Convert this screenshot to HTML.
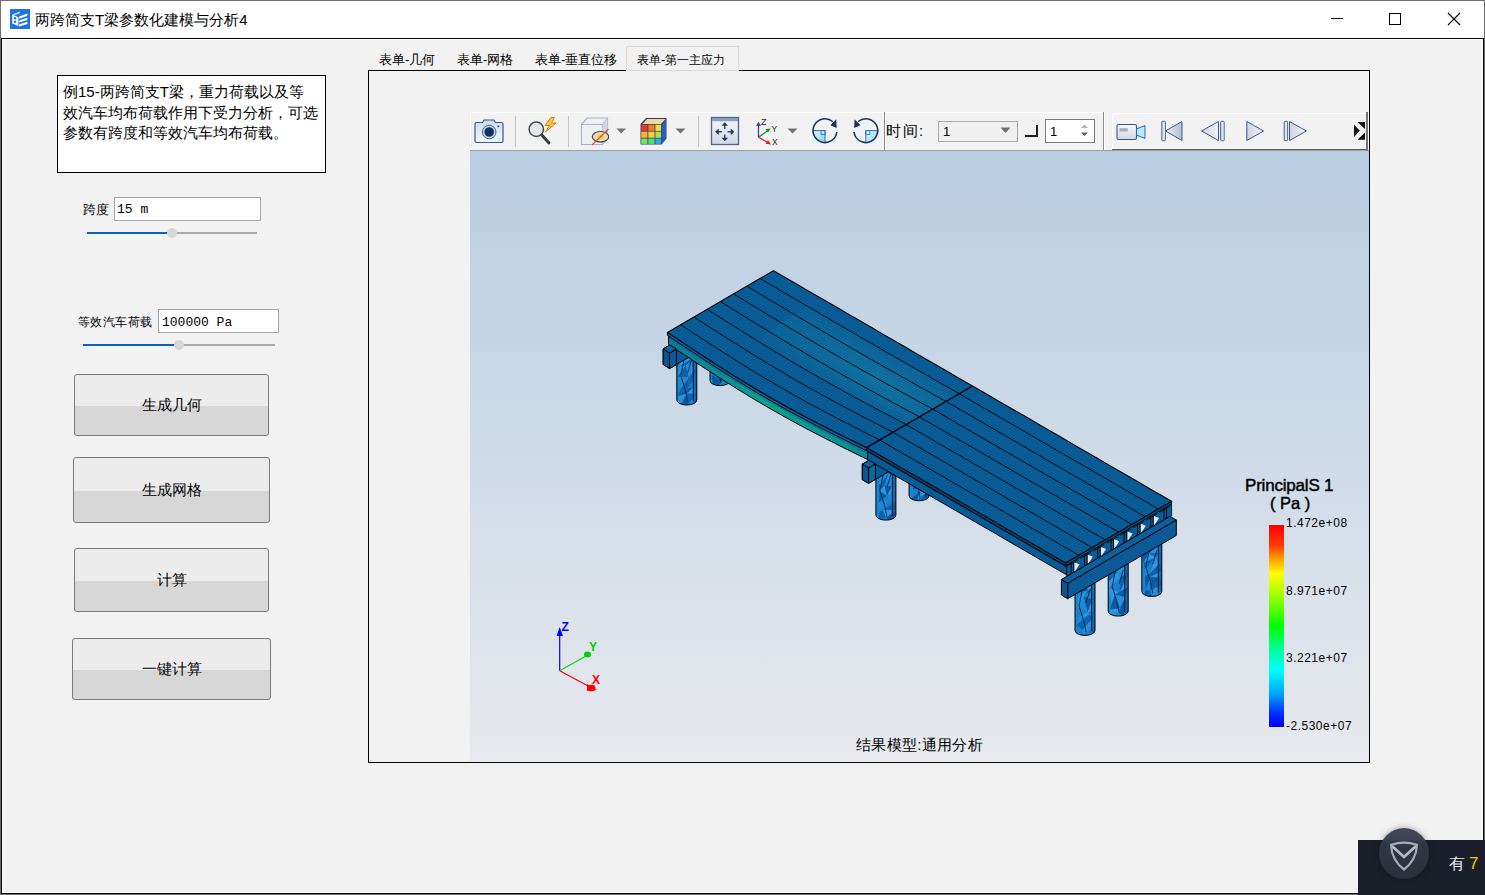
<!DOCTYPE html>
<html><head><meta charset="utf-8">
<style>
*{margin:0;padding:0;box-sizing:border-box}
html,body{width:1485px;height:895px;overflow:hidden;background:#f2f2f2;font-family:"Liberation Sans",sans-serif;color:#000}
.a{position:absolute}
.t{white-space:nowrap;line-height:1}
.btn{border:1px solid #7a7a7a;border-radius:3px;background:linear-gradient(#ececec 0,#ececec 51.5%,#d7d7d7 51.5%,#d7d7d7 100%);display:flex;align-items:center;justify-content:center;font-size:15px}
</style></head><body>
<!-- window frame -->
<div class="a" style="left:0;top:0;width:1485px;height:895px;background:#6f6f6f"></div>
<div class="a" style="left:1px;top:1px;width:1483px;height:37px;background:#fff"></div>
<div class="a" style="left:1px;top:38px;width:1483px;height:856px;background:#000"></div>
<div class="a" style="left:2px;top:39px;width:1481px;height:854px;background:#fff"></div>
<div class="a" style="left:3px;top:40px;width:1479px;height:852px;background:#f2f2f2"></div>

<!-- title -->
<svg class="a" style="left:10px;top:9px" width="20" height="20" viewBox="0 0 20 20">
 <rect width="20" height="20" fill="#1d74e6"/>
 <path d="M2.2,5.4 L9.8,2.4 L9.8,4.2 L4.2,6.3 Z" fill="#dcdcdc"/>
 <path d="M2.2,5.4 L8.4,8.2 L8.4,16.9 L2.2,14.6 Z" fill="#fff"/>
 <ellipse cx="5" cy="9.2" rx="1.2" ry="1.3" fill="#1d74e6"/>
 <ellipse cx="5" cy="12.8" rx="1.2" ry="1.3" fill="#1d74e6"/>
 <path d="M9.2,7.6 L17.4,4.6 L17.4,6.8 L9.2,9.8 Z M9.2,11.4 L17.4,8.7 L17.4,10.9 L9.2,13.6 Z M9.2,15.3 L17.4,12.7 L17.4,14.9 L9.2,17.5 Z" fill="#fff"/>
</svg>
<div class="a t" style="left:35px;top:12px;font-size:15px">两跨简支T梁参数化建模与分析4</div>
<!-- window controls -->
<div class="a" style="left:1331px;top:18px;width:12px;height:1px;background:#000"></div>
<div class="a" style="left:1389px;top:13px;width:12px;height:12px;border:1px solid #000"></div>
<svg class="a" style="left:1447px;top:12px" width="14" height="14" viewBox="0 0 14 14"><path d="M1 1 L13 13 M13 1 L1 13" stroke="#000" stroke-width="1.1"/></svg>

<!-- left panel -->
<div class="a" style="left:57px;top:75px;width:269px;height:98px;background:#fff;border:1px solid #000"></div>
<div class="a t" style="left:63px;top:82px;font-size:15px;line-height:20.5px">例15-两跨简支T梁，重力荷载以及等<br>效汽车均布荷载作用下受力分析，可选<br>参数有跨度和等效汽车均布荷载。</div>

<div class="a t" style="left:83px;top:203px;font-size:13px">跨度</div>
<div class="a" style="left:114px;top:197px;width:147px;height:24px;background:#fff;border:1px solid #a5a5a5"></div>
<div class="a t" style="left:117px;top:203px;font-size:13px;font-family:'Liberation Mono',monospace">15 m</div>
<div class="a" style="left:87px;top:232px;width:85px;height:2px;background:#0a63c4"></div>
<div class="a" style="left:172px;top:232px;width:85px;height:2px;background:#a8a8a8"></div>
<div class="a" style="left:167px;top:228px;width:10px;height:10px;border-radius:50%;background:#d6d6d6"></div>

<div class="a t" style="left:78px;top:316px;font-size:12px;letter-spacing:0.45px">等效汽车荷载</div>
<div class="a" style="left:158px;top:309px;width:121px;height:24px;background:#fff;border:1px solid #a5a5a5"></div>
<div class="a t" style="left:162px;top:316px;font-size:13px;font-family:'Liberation Mono',monospace">100000 Pa</div>
<div class="a" style="left:83px;top:344px;width:96px;height:2px;background:#0a63c4"></div>
<div class="a" style="left:179px;top:344px;width:96px;height:2px;background:#a8a8a8"></div>
<div class="a" style="left:174px;top:340px;width:10px;height:10px;border-radius:50%;background:#d6d6d6"></div>

<div class="a btn" style="left:74px;top:374px;width:195px;height:62px"><span>生成几何</span></div>
<div class="a btn" style="left:73px;top:457px;width:197px;height:66px"><span>生成网格</span></div>
<div class="a btn" style="left:74px;top:548px;width:195px;height:64px"><span>计算</span></div>
<div class="a btn" style="left:72px;top:638px;width:199px;height:62px"><span>一键计算</span></div>

<!-- tabs -->
<div class="a t" style="left:379px;top:54px;font-size:12.5px">表单-几何</div>
<div class="a t" style="left:457px;top:54px;font-size:12.5px">表单-网格</div>
<div class="a t" style="left:535px;top:54px;font-size:12.5px">表单-垂直位移</div>
<div class="a" style="left:368px;top:70px;width:1002px;height:693px;border:1px solid #000;background:#f2f2f2"></div>
<div class="a" style="left:626px;top:46px;width:113px;height:25px;border:1px solid #d9d9d9;background:#f2f2f2"></div>
<div class="a t" style="left:637px;top:54px;font-size:12.2px">表单-第一主应力</div>


<!-- viewport -->
<div class="a" style="left:470px;top:151px;width:899px;height:610px;background:linear-gradient(#b8cde3,#e7e9ed)"></div>
<svg class="a" style="left:0;top:0" width="1485" height="895" viewBox="0 0 1485 895">
<defs>
<linearGradient id="gp" x1="0" x2="1" y1="0" y2="0"><stop offset="0" stop-color="#136fba"/><stop offset="0.5" stop-color="#1f8fdc"/><stop offset="1" stop-color="#1070bd"/></linearGradient>
<linearGradient id="gfL" gradientUnits="userSpaceOnUse" x1="670" y1="0" x2="866" y2="0"><stop offset="0" stop-color="#0b6c9c"/><stop offset="0.45" stop-color="#0b8898"/><stop offset="1" stop-color="#0b7598"/></linearGradient>
<linearGradient id="gfL2" gradientUnits="userSpaceOnUse" x1="670" y1="0" x2="866" y2="0"><stop offset="0" stop-color="#0c7a9a"/><stop offset="0.5" stop-color="#10a08c"/><stop offset="1" stop-color="#0d8c94"/></linearGradient>
<linearGradient id="gdeck" gradientUnits="userSpaceOnUse" x1="700" y1="300" x2="1150" y2="540"><stop offset="0" stop-color="#085b95"/><stop offset="1" stop-color="#085b95"/></linearGradient>
<radialGradient id="ghl" gradientUnits="userSpaceOnUse" cx="880" cy="380" r="120" gradientTransform="translate(880 380) rotate(30) scale(1.6 0.35) translate(-880 -380)"><stop offset="0" stop-color="#1a88a8" stop-opacity="0.5"/><stop offset="1" stop-color="#1a88a8" stop-opacity="0"/></radialGradient>
</defs>
<clipPath id="pc1"><path d="M743.6,312.0 L743.6,361.0 A10,5 0 0 0 763.6,361.0 L763.6,312.0 Z"/></clipPath>
<path d="M743.6,312.0 L743.6,361.0 A10,5 0 0 0 763.6,361.0 L763.6,312.0 Z" fill="#1a84d0"/>
<g clip-path="url(#pc1)"><polygon points="745.9,311.6 754.2,309.6 746.2,319.0" fill="#3098e0"/><polygon points="754.2,309.6 753.7,319.6 746.2,319.0" fill="#0d62ac"/><polygon points="754.2,309.6 760.3,313.9 753.7,319.6" fill="#2590dc"/><polygon points="760.3,313.9 762.6,323.7 753.7,319.6" fill="#2590dc"/><polygon points="746.2,319.0 753.7,319.6 747.6,327.3" fill="#3098e0"/><polygon points="753.7,319.6 756.5,330.8 747.6,327.3" fill="#1a80cc"/><polygon points="753.7,319.6 762.6,323.7 756.5,330.8" fill="#0b58a0"/><polygon points="762.6,323.7 762.1,328.7 756.5,330.8" fill="#1e88d4"/><polygon points="747.6,327.3 756.5,330.8 746.3,338.7" fill="#2590dc"/><polygon points="756.5,330.8 755.1,340.3 746.3,338.7" fill="#0b58a0"/><polygon points="756.5,330.8 762.1,328.7 755.1,340.3" fill="#2590dc"/><polygon points="762.1,328.7 763.1,340.6 755.1,340.3" fill="#0d62ac"/><polygon points="746.3,338.7 755.1,340.3 747.5,350.8" fill="#3098e0"/><polygon points="755.1,340.3 754.5,344.3 747.5,350.8" fill="#0b58a0"/><polygon points="755.1,340.3 763.1,340.6 754.5,344.3" fill="#1a80cc"/><polygon points="763.1,340.6 763.6,345.8 754.5,344.3" fill="#0b58a0"/><polygon points="747.5,350.8 754.5,344.3 747.3,355.8" fill="#0d62ac"/><polygon points="754.5,344.3 752.5,360.2 747.3,355.8" fill="#2590dc"/><polygon points="754.5,344.3 763.6,345.8 752.5,360.2" fill="#2590dc"/><polygon points="763.6,345.8 762.3,357.3 752.5,360.2" fill="#3098e0"/><polygon points="747.3,355.8 752.5,360.2 745.3,363.4" fill="#0d62ac"/><polygon points="752.5,360.2 754.3,368.7 745.3,363.4" fill="#0d62ac"/><polygon points="752.5,360.2 762.3,357.3 754.3,368.7" fill="#1a80cc"/><polygon points="762.3,357.3 763.0,364.3 754.3,368.7" fill="#3098e0"/><rect x="760.1" y="312.0" width="3.5" height="54.0" fill="#0b4f90" opacity="0.55"/></g>
<path d="M751.6,317.0 L747.6,336.3 L752.6,352.5 L754.6,363.0 M758.6,320.0 L754.6,333.6" fill="none" stroke="#06284e" stroke-width="0.9"/>
<line x1="760.1" y1="312.0" x2="760.1" y2="362.0" stroke="#041f40" stroke-width="1.1"/>
<path d="M743.6,312.0 L743.6,361.0 A10,5 0 0 0 763.6,361.0 L763.6,312.0 Z" fill="none" stroke="#000" stroke-width="1"/>
<clipPath id="pc2"><path d="M942.7,427.2 L942.7,476.2 A10,5 0 0 0 962.7,476.2 L962.7,427.2 Z"/></clipPath>
<path d="M942.7,427.2 L942.7,476.2 A10,5 0 0 0 962.7,476.2 L962.7,427.2 Z" fill="#1a84d0"/>
<g clip-path="url(#pc2)"><polygon points="944.8,429.1 956.4,425.6 945.3,433.9" fill="#1a80cc"/><polygon points="956.4,425.6 948.9,435.3 945.3,433.9" fill="#2590dc"/><polygon points="956.4,425.6 959.6,428.5 948.9,435.3" fill="#3098e0"/><polygon points="959.6,428.5 959.7,434.7 948.9,435.3" fill="#1a80cc"/><polygon points="945.3,433.9 948.9,435.3 944.7,444.1" fill="#0b58a0"/><polygon points="948.9,435.3 955.5,448.8 944.7,444.1" fill="#2590dc"/><polygon points="948.9,435.3 959.7,434.7 955.5,448.8" fill="#3098e0"/><polygon points="959.7,434.7 961.1,448.2 955.5,448.8" fill="#0d62ac"/><polygon points="944.7,444.1 955.5,448.8 942.9,456.1" fill="#2590dc"/><polygon points="955.5,448.8 955.7,451.4 942.9,456.1" fill="#0b58a0"/><polygon points="955.5,448.8 961.1,448.2 955.7,451.4" fill="#0d62ac"/><polygon points="961.1,448.2 959.9,454.6 955.7,451.4" fill="#0d62ac"/><polygon points="942.9,456.1 955.7,451.4 946.5,461.5" fill="#0b58a0"/><polygon points="955.7,451.4 953.0,466.3 946.5,461.5" fill="#1a80cc"/><polygon points="955.7,451.4 959.9,454.6 953.0,466.3" fill="#2590dc"/><polygon points="959.9,454.6 960.1,462.1 953.0,466.3" fill="#1a80cc"/><polygon points="946.5,461.5 953.0,466.3 943.0,474.9" fill="#2590dc"/><polygon points="953.0,466.3 952.5,476.2 943.0,474.9" fill="#1a80cc"/><polygon points="953.0,466.3 960.1,462.1 952.5,476.2" fill="#0d62ac"/><polygon points="960.1,462.1 962.1,474.1 952.5,476.2" fill="#1e88d4"/><polygon points="943.0,474.9 952.5,476.2 945.9,483.8" fill="#0b58a0"/><polygon points="952.5,476.2 948.8,480.2 945.9,483.8" fill="#0b58a0"/><polygon points="952.5,476.2 962.1,474.1 948.8,480.2" fill="#0b58a0"/><polygon points="962.1,474.1 962.5,482.7 948.8,480.2" fill="#0b58a0"/><rect x="959.2" y="427.2" width="3.5" height="54.0" fill="#0b4f90" opacity="0.55"/></g>
<path d="M950.7,432.2 L946.7,451.5 L951.7,467.7 L953.7,478.2 M957.7,435.2 L953.7,448.8" fill="none" stroke="#06284e" stroke-width="0.9"/>
<line x1="959.2" y1="427.2" x2="959.2" y2="477.2" stroke="#041f40" stroke-width="1.1"/>
<path d="M942.7,427.2 L942.7,476.2 A10,5 0 0 0 962.7,476.2 L962.7,427.2 Z" fill="none" stroke="#000" stroke-width="1"/>
<clipPath id="pc3"><path d="M1141.8,542.5 L1141.8,591.5 A10,5 0 0 0 1161.8,591.5 L1161.8,542.5 Z"/></clipPath>
<path d="M1141.8,542.5 L1141.8,591.5 A10,5 0 0 0 1161.8,591.5 L1161.8,542.5 Z" fill="#1a84d0"/>
<g clip-path="url(#pc3)"><polygon points="1144.6,544.6 1149.2,546.5 1142.2,553.1" fill="#1e88d4"/><polygon points="1149.2,546.5 1149.0,553.2 1142.2,553.1" fill="#1a80cc"/><polygon points="1149.2,546.5 1161.0,543.6 1149.0,553.2" fill="#0d62ac"/><polygon points="1161.0,543.6 1158.9,553.1 1149.0,553.2" fill="#2590dc"/><polygon points="1142.2,553.1 1149.0,553.2 1143.5,562.7" fill="#0b58a0"/><polygon points="1149.0,553.2 1155.7,557.5 1143.5,562.7" fill="#3098e0"/><polygon points="1149.0,553.2 1158.9,553.1 1155.7,557.5" fill="#0d62ac"/><polygon points="1158.9,553.1 1159.7,563.3 1155.7,557.5" fill="#1e88d4"/><polygon points="1143.5,562.7 1155.7,557.5 1144.7,569.2" fill="#0d62ac"/><polygon points="1155.7,557.5 1150.2,573.2 1144.7,569.2" fill="#1a80cc"/><polygon points="1155.7,557.5 1159.7,563.3 1150.2,573.2" fill="#3098e0"/><polygon points="1159.7,563.3 1161.4,571.1 1150.2,573.2" fill="#0d62ac"/><polygon points="1144.7,569.2 1150.2,573.2 1145.2,576.5" fill="#1e88d4"/><polygon points="1150.2,573.2 1150.4,577.0 1145.2,576.5" fill="#0b58a0"/><polygon points="1150.2,573.2 1161.4,571.1 1150.4,577.0" fill="#0d62ac"/><polygon points="1161.4,571.1 1159.6,577.7 1150.4,577.0" fill="#3098e0"/><polygon points="1145.2,576.5 1150.4,577.0 1145.4,590.1" fill="#0b58a0"/><polygon points="1150.4,577.0 1150.3,590.7 1145.4,590.1" fill="#1a80cc"/><polygon points="1150.4,577.0 1159.6,577.7 1150.3,590.7" fill="#0b58a0"/><polygon points="1159.6,577.7 1161.5,585.1 1150.3,590.7" fill="#0d62ac"/><polygon points="1145.4,590.1 1150.3,590.7 1144.4,598.3" fill="#0b58a0"/><polygon points="1150.3,590.7 1154.3,600.5 1144.4,598.3" fill="#0d62ac"/><polygon points="1150.3,590.7 1161.5,585.1 1154.3,600.5" fill="#2590dc"/><polygon points="1161.5,585.1 1158.3,595.1 1154.3,600.5" fill="#1e88d4"/><rect x="1158.3" y="542.5" width="3.5" height="54.0" fill="#0b4f90" opacity="0.55"/></g>
<path d="M1149.8,547.5 L1145.8,566.8 L1150.8,583.0 L1152.8,593.5 M1156.8,550.5 L1152.8,564.1" fill="none" stroke="#06284e" stroke-width="0.9"/>
<line x1="1158.3" y1="542.5" x2="1158.3" y2="592.5" stroke="#041f40" stroke-width="1.1"/>
<path d="M1141.8,542.5 L1141.8,591.5 A10,5 0 0 0 1161.8,591.5 L1161.8,542.5 Z" fill="none" stroke="#000" stroke-width="1"/>
<clipPath id="pc4"><path d="M710.0,331.6 L710.0,380.6 A10,5 0 0 0 730.0,380.6 L730.0,331.6 Z"/></clipPath>
<path d="M710.0,331.6 L710.0,380.6 A10,5 0 0 0 730.0,380.6 L730.0,331.6 Z" fill="#1a84d0"/>
<g clip-path="url(#pc4)"><polygon points="710.0,329.3 719.1,333.1 710.9,342.2" fill="#1e88d4"/><polygon points="719.1,333.1 717.2,342.6 710.9,342.2" fill="#0d62ac"/><polygon points="719.1,333.1 729.4,329.3 717.2,342.6" fill="#3098e0"/><polygon points="729.4,329.3 727.3,338.5 717.2,342.6" fill="#2590dc"/><polygon points="710.9,342.2 717.2,342.6 712.1,349.3" fill="#1a80cc"/><polygon points="717.2,342.6 719.3,353.6 712.1,349.3" fill="#1a80cc"/><polygon points="717.2,342.6 727.3,338.5 719.3,353.6" fill="#1a80cc"/><polygon points="727.3,338.5 729.6,346.8 719.3,353.6" fill="#1a80cc"/><polygon points="712.1,349.3 719.3,353.6 713.7,358.1" fill="#0b58a0"/><polygon points="719.3,353.6 717.6,357.3 713.7,358.1" fill="#3098e0"/><polygon points="719.3,353.6 729.6,346.8 717.6,357.3" fill="#3098e0"/><polygon points="729.6,346.8 728.5,361.4 717.6,357.3" fill="#1e88d4"/><polygon points="713.7,358.1 717.6,357.3 710.8,365.9" fill="#1e88d4"/><polygon points="717.6,357.3 720.7,368.0 710.8,365.9" fill="#1a80cc"/><polygon points="717.6,357.3 728.5,361.4 720.7,368.0" fill="#0d62ac"/><polygon points="728.5,361.4 726.2,369.7 720.7,368.0" fill="#1e88d4"/><polygon points="710.8,365.9 720.7,368.0 711.4,374.9" fill="#2590dc"/><polygon points="720.7,368.0 722.7,380.6 711.4,374.9" fill="#1a80cc"/><polygon points="720.7,368.0 726.2,369.7 722.7,380.6" fill="#0d62ac"/><polygon points="726.2,369.7 729.9,378.1 722.7,380.6" fill="#0b58a0"/><polygon points="711.4,374.9 722.7,380.6 713.5,386.5" fill="#0b58a0"/><polygon points="722.7,380.6 717.7,388.0 713.5,386.5" fill="#0b58a0"/><polygon points="722.7,380.6 729.9,378.1 717.7,388.0" fill="#1e88d4"/><polygon points="729.9,378.1 727.1,383.8 717.7,388.0" fill="#1a80cc"/><rect x="726.5" y="331.6" width="3.5" height="54.0" fill="#0b4f90" opacity="0.55"/></g>
<path d="M718.0,336.6 L714.0,355.9 L719.0,372.1 L721.0,382.6 M725.0,339.6 L721.0,353.2" fill="none" stroke="#06284e" stroke-width="0.9"/>
<line x1="726.5" y1="331.6" x2="726.5" y2="381.6" stroke="#041f40" stroke-width="1.1"/>
<path d="M710.0,331.6 L710.0,380.6 A10,5 0 0 0 730.0,380.6 L730.0,331.6 Z" fill="none" stroke="#000" stroke-width="1"/>
<clipPath id="pc5"><path d="M909.1,446.8 L909.1,495.8 A10,5 0 0 0 929.1,495.8 L929.1,446.8 Z"/></clipPath>
<path d="M909.1,446.8 L909.1,495.8 A10,5 0 0 0 929.1,495.8 L929.1,446.8 Z" fill="#1a84d0"/>
<g clip-path="url(#pc5)"><polygon points="911.6,446.4 920.9,443.3 911.5,453.8" fill="#1a80cc"/><polygon points="920.9,443.3 917.8,453.9 911.5,453.8" fill="#2590dc"/><polygon points="920.9,443.3 926.3,446.0 917.8,453.9" fill="#0d62ac"/><polygon points="926.3,446.0 927.8,457.2 917.8,453.9" fill="#0b58a0"/><polygon points="911.5,453.8 917.8,453.9 911.0,467.6" fill="#1e88d4"/><polygon points="917.8,453.9 919.7,462.6 911.0,467.6" fill="#0b58a0"/><polygon points="917.8,453.9 927.8,457.2 919.7,462.6" fill="#0d62ac"/><polygon points="927.8,457.2 926.6,465.0 919.7,462.6" fill="#1a80cc"/><polygon points="911.0,467.6 919.7,462.6 909.6,474.0" fill="#1e88d4"/><polygon points="919.7,462.6 915.2,472.8 909.6,474.0" fill="#2590dc"/><polygon points="919.7,462.6 926.6,465.0 915.2,472.8" fill="#0d62ac"/><polygon points="926.6,465.0 926.9,474.9 915.2,472.8" fill="#3098e0"/><polygon points="909.6,474.0 915.2,472.8 912.9,483.5" fill="#0d62ac"/><polygon points="915.2,472.8 915.3,482.6 912.9,483.5" fill="#1a80cc"/><polygon points="915.2,472.8 926.9,474.9 915.3,482.6" fill="#2590dc"/><polygon points="926.9,474.9 928.1,484.3 915.3,482.6" fill="#2590dc"/><polygon points="912.9,483.5 915.3,482.6 912.7,489.3" fill="#1e88d4"/><polygon points="915.3,482.6 921.3,490.1 912.7,489.3" fill="#0b58a0"/><polygon points="915.3,482.6 928.1,484.3 921.3,490.1" fill="#1e88d4"/><polygon points="928.1,484.3 928.4,491.5 921.3,490.1" fill="#0b58a0"/><polygon points="912.7,489.3 921.3,490.1 910.8,499.5" fill="#1a80cc"/><polygon points="921.3,490.1 917.2,500.3 910.8,499.5" fill="#0b58a0"/><polygon points="921.3,490.1 928.4,491.5 917.2,500.3" fill="#2590dc"/><polygon points="928.4,491.5 926.3,498.8 917.2,500.3" fill="#0d62ac"/><rect x="925.6" y="446.8" width="3.5" height="54.0" fill="#0b4f90" opacity="0.55"/></g>
<path d="M917.1,451.8 L913.1,471.1 L918.1,487.3 L920.1,497.8 M924.1,454.8 L920.1,468.4" fill="none" stroke="#06284e" stroke-width="0.9"/>
<line x1="925.6" y1="446.8" x2="925.6" y2="496.8" stroke="#041f40" stroke-width="1.1"/>
<path d="M909.1,446.8 L909.1,495.8 A10,5 0 0 0 929.1,495.8 L929.1,446.8 Z" fill="none" stroke="#000" stroke-width="1"/>
<clipPath id="pc6"><path d="M1108.2,562.1 L1108.2,611.1 A10,5 0 0 0 1128.2,611.1 L1128.2,562.1 Z"/></clipPath>
<path d="M1108.2,562.1 L1108.2,611.1 A10,5 0 0 0 1128.2,611.1 L1128.2,562.1 Z" fill="#1a84d0"/>
<g clip-path="url(#pc6)"><polygon points="1109.3,562.0 1114.8,560.8 1109.3,568.8" fill="#1a80cc"/><polygon points="1114.8,560.8 1116.7,573.0 1109.3,568.8" fill="#0d62ac"/><polygon points="1114.8,560.8 1127.9,559.2 1116.7,573.0" fill="#1e88d4"/><polygon points="1127.9,559.2 1128.0,571.8 1116.7,573.0" fill="#2590dc"/><polygon points="1109.3,568.8 1116.7,573.0 1108.7,581.9" fill="#0d62ac"/><polygon points="1116.7,573.0 1120.1,577.8 1108.7,581.9" fill="#3098e0"/><polygon points="1116.7,573.0 1128.0,571.8 1120.1,577.8" fill="#1e88d4"/><polygon points="1128.0,571.8 1124.8,581.4 1120.1,577.8" fill="#0b58a0"/><polygon points="1108.7,581.9 1120.1,577.8 1108.5,588.5" fill="#3098e0"/><polygon points="1120.1,577.8 1119.8,592.5 1108.5,588.5" fill="#1a80cc"/><polygon points="1120.1,577.8 1124.8,581.4 1119.8,592.5" fill="#0d62ac"/><polygon points="1124.8,581.4 1127.5,587.6 1119.8,592.5" fill="#3098e0"/><polygon points="1108.5,588.5 1119.8,592.5 1111.3,600.9" fill="#3098e0"/><polygon points="1119.8,592.5 1114.9,594.8 1111.3,600.9" fill="#3098e0"/><polygon points="1119.8,592.5 1127.5,587.6 1114.9,594.8" fill="#0d62ac"/><polygon points="1127.5,587.6 1125.2,597.0 1114.9,594.8" fill="#0b58a0"/><polygon points="1111.3,600.9 1114.9,594.8 1109.7,609.4" fill="#3098e0"/><polygon points="1114.9,594.8 1120.1,608.4 1109.7,609.4" fill="#0b58a0"/><polygon points="1114.9,594.8 1125.2,597.0 1120.1,608.4" fill="#2590dc"/><polygon points="1125.2,597.0 1124.7,608.5 1120.1,608.4" fill="#0b58a0"/><polygon points="1109.7,609.4 1120.1,608.4 1111.4,617.0" fill="#3098e0"/><polygon points="1120.1,608.4 1118.9,612.6 1111.4,617.0" fill="#2590dc"/><polygon points="1120.1,608.4 1124.7,608.5 1118.9,612.6" fill="#0b58a0"/><polygon points="1124.7,608.5 1124.5,618.6 1118.9,612.6" fill="#0b58a0"/><rect x="1124.7" y="562.1" width="3.5" height="54.0" fill="#0b4f90" opacity="0.55"/></g>
<path d="M1116.2,567.1 L1112.2,586.4 L1117.2,602.6 L1119.2,613.1 M1123.2,570.1 L1119.2,583.7" fill="none" stroke="#06284e" stroke-width="0.9"/>
<line x1="1124.7" y1="562.1" x2="1124.7" y2="612.1" stroke="#041f40" stroke-width="1.1"/>
<path d="M1108.2,562.1 L1108.2,611.1 A10,5 0 0 0 1128.2,611.1 L1128.2,562.1 Z" fill="none" stroke="#000" stroke-width="1"/>
<clipPath id="pc7"><path d="M676.8,351.0 L676.8,400.0 A10,5 0 0 0 696.8,400.0 L696.8,351.0 Z"/></clipPath>
<path d="M676.8,351.0 L676.8,400.0 A10,5 0 0 0 696.8,400.0 L696.8,351.0 Z" fill="#1a84d0"/>
<g clip-path="url(#pc7)"><polygon points="680.7,348.4 688.6,350.9 680.5,358.0" fill="#1e88d4"/><polygon points="688.6,350.9 690.8,359.3 680.5,358.0" fill="#1e88d4"/><polygon points="688.6,350.9 693.0,350.5 690.8,359.3" fill="#0b58a0"/><polygon points="693.0,350.5 696.1,359.1 690.8,359.3" fill="#3098e0"/><polygon points="680.5,358.0 690.8,359.3 679.3,366.2" fill="#3098e0"/><polygon points="690.8,359.3 685.9,365.1 679.3,366.2" fill="#0d62ac"/><polygon points="690.8,359.3 696.1,359.1 685.9,365.1" fill="#0d62ac"/><polygon points="696.1,359.1 696.5,367.1 685.9,365.1" fill="#1e88d4"/><polygon points="679.3,366.2 685.9,365.1 677.7,376.7" fill="#2590dc"/><polygon points="685.9,365.1 689.0,377.4 677.7,376.7" fill="#0d62ac"/><polygon points="685.9,365.1 696.5,367.1 689.0,377.4" fill="#2590dc"/><polygon points="696.5,367.1 693.4,380.4 689.0,377.4" fill="#0d62ac"/><polygon points="677.7,376.7 689.0,377.4 680.4,389.7" fill="#1e88d4"/><polygon points="689.0,377.4 687.4,388.4 680.4,389.7" fill="#0b58a0"/><polygon points="689.0,377.4 693.4,380.4 687.4,388.4" fill="#0d62ac"/><polygon points="693.4,380.4 693.3,387.3 687.4,388.4" fill="#1a80cc"/><polygon points="680.4,389.7 687.4,388.4 677.4,396.2" fill="#0d62ac"/><polygon points="687.4,388.4 687.0,393.5 677.4,396.2" fill="#0b58a0"/><polygon points="687.4,388.4 693.3,387.3 687.0,393.5" fill="#0b58a0"/><polygon points="693.3,387.3 696.4,394.1 687.0,393.5" fill="#3098e0"/><polygon points="677.4,396.2 687.0,393.5 679.6,406.9" fill="#2590dc"/><polygon points="687.0,393.5 688.1,404.5 679.6,406.9" fill="#0b58a0"/><polygon points="687.0,393.5 696.4,394.1 688.1,404.5" fill="#0d62ac"/><polygon points="696.4,394.1 696.7,402.1 688.1,404.5" fill="#1e88d4"/><rect x="693.3" y="351.0" width="3.5" height="54.0" fill="#0b4f90" opacity="0.55"/></g>
<path d="M684.8,356.0 L680.8,375.3 L685.8,391.5 L687.8,402.0 M691.8,359.0 L687.8,372.6" fill="none" stroke="#06284e" stroke-width="0.9"/>
<line x1="693.3" y1="351.0" x2="693.3" y2="401.0" stroke="#041f40" stroke-width="1.1"/>
<path d="M676.8,351.0 L676.8,400.0 A10,5 0 0 0 696.8,400.0 L696.8,351.0 Z" fill="none" stroke="#000" stroke-width="1"/>
<clipPath id="pc8"><path d="M875.9,466.1 L875.9,515.1 A10,5 0 0 0 895.9,515.1 L895.9,466.1 Z"/></clipPath>
<path d="M875.9,466.1 L875.9,515.1 A10,5 0 0 0 895.9,515.1 L895.9,466.1 Z" fill="#1a84d0"/>
<g clip-path="url(#pc8)"><polygon points="876.8,468.7 889.5,462.3 878.6,472.2" fill="#3098e0"/><polygon points="889.5,462.3 888.5,474.1 878.6,472.2" fill="#1e88d4"/><polygon points="889.5,462.3 892.5,467.4 888.5,474.1" fill="#1a80cc"/><polygon points="892.5,467.4 892.7,475.3 888.5,474.1" fill="#0b58a0"/><polygon points="878.6,472.2 888.5,474.1 878.9,485.5" fill="#1e88d4"/><polygon points="888.5,474.1 884.6,485.5 878.9,485.5" fill="#0d62ac"/><polygon points="888.5,474.1 892.7,475.3 884.6,485.5" fill="#2590dc"/><polygon points="892.7,475.3 892.0,486.5 884.6,485.5" fill="#1e88d4"/><polygon points="878.9,485.5 884.6,485.5 879.5,490.7" fill="#0b58a0"/><polygon points="884.6,485.5 887.0,495.9 879.5,490.7" fill="#3098e0"/><polygon points="884.6,485.5 892.0,486.5 887.0,495.9" fill="#0b58a0"/><polygon points="892.0,486.5 894.7,490.4 887.0,495.9" fill="#3098e0"/><polygon points="879.5,490.7 887.0,495.9 878.9,502.5" fill="#0b58a0"/><polygon points="887.0,495.9 889.6,500.1 878.9,502.5" fill="#1a80cc"/><polygon points="887.0,495.9 894.7,490.4 889.6,500.1" fill="#1e88d4"/><polygon points="894.7,490.4 895.5,502.6 889.6,500.1" fill="#1e88d4"/><polygon points="878.9,502.5 889.6,500.1 879.3,512.0" fill="#1e88d4"/><polygon points="889.6,500.1 882.8,509.8 879.3,512.0" fill="#1a80cc"/><polygon points="889.6,500.1 895.5,502.6 882.8,509.8" fill="#1a80cc"/><polygon points="895.5,502.6 895.4,510.5 882.8,509.8" fill="#0d62ac"/><polygon points="879.3,512.0 882.8,509.8 879.0,519.8" fill="#0b58a0"/><polygon points="882.8,509.8 886.2,517.9 879.0,519.8" fill="#0d62ac"/><polygon points="882.8,509.8 895.4,510.5 886.2,517.9" fill="#3098e0"/><polygon points="895.4,510.5 893.8,523.0 886.2,517.9" fill="#0b58a0"/><rect x="892.4" y="466.1" width="3.5" height="54.0" fill="#0b4f90" opacity="0.55"/></g>
<path d="M883.9,471.1 L879.9,490.4 L884.9,506.6 L886.9,517.1 M890.9,474.1 L886.9,487.7" fill="none" stroke="#06284e" stroke-width="0.9"/>
<line x1="892.4" y1="466.1" x2="892.4" y2="516.1" stroke="#041f40" stroke-width="1.1"/>
<path d="M875.9,466.1 L875.9,515.1 A10,5 0 0 0 895.9,515.1 L895.9,466.1 Z" fill="none" stroke="#000" stroke-width="1"/>
<clipPath id="pc9"><path d="M1075.0,581.4 L1075.0,630.4 A10,5 0 0 0 1095.0,630.4 L1095.0,581.4 Z"/></clipPath>
<path d="M1075.0,581.4 L1075.0,630.4 A10,5 0 0 0 1095.0,630.4 L1095.0,581.4 Z" fill="#1a84d0"/>
<g clip-path="url(#pc9)"><polygon points="1075.3,581.0 1083.0,581.0 1077.2,591.9" fill="#3098e0"/><polygon points="1083.0,581.0 1088.4,590.4 1077.2,591.9" fill="#0b58a0"/><polygon points="1083.0,581.0 1094.0,583.6 1088.4,590.4" fill="#3098e0"/><polygon points="1094.0,583.6 1093.1,588.2 1088.4,590.4" fill="#2590dc"/><polygon points="1077.2,591.9 1088.4,590.4 1078.1,596.8" fill="#1e88d4"/><polygon points="1088.4,590.4 1083.9,596.7 1078.1,596.8" fill="#3098e0"/><polygon points="1088.4,590.4 1093.1,588.2 1083.9,596.7" fill="#0b58a0"/><polygon points="1093.1,588.2 1092.1,599.2 1083.9,596.7" fill="#1e88d4"/><polygon points="1078.1,596.8 1083.9,596.7 1077.0,608.6" fill="#2590dc"/><polygon points="1083.9,596.7 1087.7,612.2 1077.0,608.6" fill="#1e88d4"/><polygon points="1083.9,596.7 1092.1,599.2 1087.7,612.2" fill="#0b58a0"/><polygon points="1092.1,599.2 1093.5,610.7 1087.7,612.2" fill="#3098e0"/><polygon points="1077.0,608.6 1087.7,612.2 1077.8,618.6" fill="#1a80cc"/><polygon points="1087.7,612.2 1088.8,615.0 1077.8,618.6" fill="#3098e0"/><polygon points="1087.7,612.2 1093.5,610.7 1088.8,615.0" fill="#1a80cc"/><polygon points="1093.5,610.7 1093.7,617.3 1088.8,615.0" fill="#1a80cc"/><polygon points="1077.8,618.6 1088.8,615.0 1076.2,625.2" fill="#1e88d4"/><polygon points="1088.8,615.0 1082.6,629.8 1076.2,625.2" fill="#0d62ac"/><polygon points="1088.8,615.0 1093.7,617.3 1082.6,629.8" fill="#0d62ac"/><polygon points="1093.7,617.3 1091.1,628.7 1082.6,629.8" fill="#2590dc"/><polygon points="1076.2,625.2 1082.6,629.8 1078.2,634.8" fill="#1a80cc"/><polygon points="1082.6,629.8 1083.5,634.6 1078.2,634.8" fill="#1a80cc"/><polygon points="1082.6,629.8 1091.1,628.7 1083.5,634.6" fill="#2590dc"/><polygon points="1091.1,628.7 1094.9,633.1 1083.5,634.6" fill="#1a80cc"/><rect x="1091.5" y="581.4" width="3.5" height="54.0" fill="#0b4f90" opacity="0.55"/></g>
<path d="M1083.0,586.4 L1079.0,605.7 L1084.0,621.9 L1086.0,632.4 M1090.0,589.4 L1086.0,603.0" fill="none" stroke="#06284e" stroke-width="0.9"/>
<line x1="1091.5" y1="581.4" x2="1091.5" y2="631.4" stroke="#041f40" stroke-width="1.1"/>
<path d="M1075.0,581.4 L1075.0,630.4 A10,5 0 0 0 1095.0,630.4 L1095.0,581.4 Z" fill="none" stroke="#000" stroke-width="1"/>
<polygon points="778.1,289.4 669.5,353.1 669.5,368.6 778.1,304.9" fill="#0b5a97" stroke="#000" stroke-width="1" stroke-linejoin="round" />
<polygon points="663.2,348.9 669.5,353.1 669.5,368.6 663.2,364.4" fill="#0a5692" stroke="#000" stroke-width="1" stroke-linejoin="round" />
<polygon points="771.7,285.7 778.1,289.4 669.5,353.1 663.2,348.9" fill="#0c609e" stroke="#000" stroke-width="1" stroke-linejoin="round" />
<polygon points="977.2,404.7 868.6,467.9 868.6,483.4 977.2,420.2" fill="#0b5a97" stroke="#000" stroke-width="1" stroke-linejoin="round" />
<polygon points="862.3,464.2 868.6,467.9 868.6,483.4 862.3,479.7" fill="#0a5692" stroke="#000" stroke-width="1" stroke-linejoin="round" />
<polygon points="970.8,401.0 977.2,404.7 868.6,467.9 862.3,464.2" fill="#0c609e" stroke="#000" stroke-width="1" stroke-linejoin="round" />
<polygon points="668.5,334.8 676.8,340.3 685.1,345.8 693.3,351.3 701.6,356.7 709.9,362.1 718.2,367.5 726.5,372.7 734.8,377.9 743.1,383.1 751.4,388.1 759.7,393.0 768.0,397.9 776.3,402.6 784.6,407.3 792.9,411.9 801.2,416.4 809.5,420.8 817.8,425.1 826.1,429.4 834.4,433.6 842.7,437.8 851.0,441.9 859.3,446.0 867.6,450.1 867.6,459.6 859.3,455.5 851.0,451.4 842.7,447.3 834.4,443.1 826.1,438.9 817.8,434.6 809.5,430.3 801.2,425.9 792.9,421.4 784.6,416.8 776.3,412.1 768.0,407.4 759.7,402.5 751.4,397.6 743.1,392.6 734.8,387.4 726.5,382.2 718.2,377.0 709.9,371.6 701.6,366.2 693.3,360.8 685.1,355.3 676.8,349.8 668.5,344.3" fill="url(#gfL)" stroke="#000" stroke-width="0" stroke-linejoin="round" />
<polygon points="668.5,338.8 676.8,344.3 685.1,349.8 693.3,355.3 701.6,360.7 709.9,366.1 718.2,371.5 726.5,376.7 734.8,381.9 743.1,387.1 751.4,392.1 759.7,397.0 768.0,401.9 776.3,406.6 784.6,411.3 792.9,415.9 801.2,420.4 809.5,424.8 817.8,429.1 826.1,433.4 834.4,437.6 842.7,441.8 851.0,445.9 859.3,450.0 867.6,454.1 867.6,459.6 859.3,455.5 851.0,451.4 842.7,447.3 834.4,443.1 826.1,438.9 817.8,434.6 809.5,430.3 801.2,425.9 792.9,421.4 784.6,416.8 776.3,412.1 768.0,407.4 759.7,402.5 751.4,397.6 743.1,392.6 734.8,387.4 726.5,382.2 718.2,377.0 709.9,371.6 701.6,366.2 693.3,360.8 685.1,355.3 676.8,349.8 668.5,344.3" fill="url(#gfL2)" stroke="#000" stroke-width="0" stroke-linejoin="round" />
<polygon points="668.5,334.8 676.8,340.3 685.1,345.8 693.3,351.3 701.6,356.7 709.9,362.1 718.2,367.5 726.5,372.7 734.8,377.9 743.1,383.1 751.4,388.1 759.7,393.0 768.0,397.9 776.3,402.6 784.6,407.3 792.9,411.9 801.2,416.4 809.5,420.8 817.8,425.1 826.1,429.4 834.4,433.6 842.7,437.8 851.0,441.9 859.3,446.0 867.6,450.1 867.6,459.6 859.3,455.5 851.0,451.4 842.7,447.3 834.4,443.1 826.1,438.9 817.8,434.6 809.5,430.3 801.2,425.9 792.9,421.4 784.6,416.8 776.3,412.1 768.0,407.4 759.7,402.5 751.4,397.6 743.1,392.6 734.8,387.4 726.5,382.2 718.2,377.0 709.9,371.6 701.6,366.2 693.3,360.8 685.1,355.3 676.8,349.8 668.5,344.3" fill="none" stroke="#000" stroke-width="1" stroke-linejoin="round" />
<polygon points="867.6,449.6 875.9,454.4 884.2,459.2 892.4,464.0 900.7,468.8 909.0,473.6 917.3,478.4 925.6,483.2 933.9,488.0 942.2,492.8 950.5,497.6 958.8,502.4 967.1,507.2 975.4,512.0 983.7,516.8 992.0,521.6 1000.3,526.4 1008.6,531.3 1016.9,536.1 1025.2,540.9 1033.5,545.7 1041.8,550.5 1050.1,555.3 1058.4,560.1 1066.7,564.9 1066.7,574.9 1058.4,570.1 1050.1,565.3 1041.8,560.5 1033.5,555.7 1025.2,550.9 1016.9,546.1 1008.6,541.3 1000.3,536.4 992.0,531.6 983.7,526.8 975.4,522.0 967.1,517.2 958.8,512.4 950.5,507.6 942.2,502.8 933.9,498.0 925.6,493.2 917.3,488.4 909.0,483.6 900.7,478.8 892.4,474.0 884.2,469.2 875.9,464.4 867.6,459.6" fill="#085b95" stroke="#000" stroke-width="1" stroke-linejoin="round" />
<polyline points="867.6,451.6 875.9,456.4 884.2,461.2 892.4,466.0 900.7,470.8 909.0,475.6 917.3,480.4 925.6,485.2 933.9,490.0 942.2,494.8 950.5,499.6 958.8,504.4 967.1,509.2 975.4,514.0 983.7,518.8 992.0,523.6 1000.3,528.4 1008.6,533.3 1016.9,538.1 1025.2,542.9 1033.5,547.7 1041.8,552.5 1050.1,557.3 1058.4,562.1 1066.7,566.9" fill="none" stroke="#000" stroke-width="0.8"/>
<polygon points="1171.6,503.8 1066.7,564.9 1066.7,576.9 1171.6,515.8" fill="#095b95" stroke="#000" stroke-width="0.8" stroke-linejoin="round" />
<polyline points="1164.0,508.2 1164.0,519.7" fill="none" stroke="#000" stroke-width="0.9"/>
<polyline points="1166.5,508.2 1166.5,519.7" fill="none" stroke="#000" stroke-width="0.9"/>
<polyline points="1170.3,506.1 1159.7,512.2" fill="none" stroke="#000" stroke-width="0.8"/>
<polygon points="1153.8,516.1 1153.8,526.1 1159.1,518.0" fill="#e6eaef" stroke="none" stroke-width="0" stroke-linejoin="round" />
<polyline points="1150.7,515.9 1150.7,527.4" fill="none" stroke="#000" stroke-width="0.9"/>
<polyline points="1153.2,515.9 1153.2,527.4" fill="none" stroke="#000" stroke-width="0.9"/>
<polyline points="1157.0,513.8 1146.4,520.0" fill="none" stroke="#000" stroke-width="0.8"/>
<polygon points="1140.6,523.8 1140.6,533.8 1145.9,525.8" fill="#e6eaef" stroke="none" stroke-width="0" stroke-linejoin="round" />
<polyline points="1137.5,523.6 1137.5,535.1" fill="none" stroke="#000" stroke-width="0.9"/>
<polyline points="1140.0,523.6 1140.0,535.1" fill="none" stroke="#000" stroke-width="0.9"/>
<polyline points="1143.8,521.5 1133.2,527.7" fill="none" stroke="#000" stroke-width="0.8"/>
<polygon points="1127.3,531.6 1127.3,541.6 1132.6,533.5" fill="#e6eaef" stroke="none" stroke-width="0" stroke-linejoin="round" />
<polyline points="1124.2,531.3 1124.2,542.8" fill="none" stroke="#000" stroke-width="0.9"/>
<polyline points="1126.7,531.3 1126.7,542.8" fill="none" stroke="#000" stroke-width="0.9"/>
<polyline points="1130.5,529.2 1119.9,535.4" fill="none" stroke="#000" stroke-width="0.8"/>
<polygon points="1114.1,539.3 1114.1,549.3 1119.4,541.2" fill="#e6eaef" stroke="none" stroke-width="0" stroke-linejoin="round" />
<polyline points="1111.0,539.0 1111.0,550.5" fill="none" stroke="#000" stroke-width="0.9"/>
<polyline points="1113.5,539.0 1113.5,550.5" fill="none" stroke="#000" stroke-width="0.9"/>
<polyline points="1117.3,536.9 1106.7,543.1" fill="none" stroke="#000" stroke-width="0.8"/>
<polygon points="1100.8,547.0 1100.8,557.0 1106.1,548.9" fill="#e6eaef" stroke="none" stroke-width="0" stroke-linejoin="round" />
<polyline points="1097.7,546.7 1097.7,558.2" fill="none" stroke="#000" stroke-width="0.9"/>
<polyline points="1100.2,546.7 1100.2,558.2" fill="none" stroke="#000" stroke-width="0.9"/>
<polyline points="1104.0,544.6 1093.4,550.8" fill="none" stroke="#000" stroke-width="0.8"/>
<polygon points="1087.6,554.7 1087.6,564.7 1092.9,556.6" fill="#e6eaef" stroke="none" stroke-width="0" stroke-linejoin="round" />
<polyline points="1084.5,554.4 1084.5,565.9" fill="none" stroke="#000" stroke-width="0.9"/>
<polyline points="1087.0,554.4 1087.0,565.9" fill="none" stroke="#000" stroke-width="0.9"/>
<polyline points="1090.8,552.3 1080.2,558.5" fill="none" stroke="#000" stroke-width="0.8"/>
<polygon points="1074.3,562.4 1074.3,572.4 1079.6,564.3" fill="#e6eaef" stroke="none" stroke-width="0" stroke-linejoin="round" />
<polyline points="1071.2,562.1 1071.2,573.6" fill="none" stroke="#000" stroke-width="0.9"/>
<polyline points="1073.7,562.1 1073.7,573.6" fill="none" stroke="#000" stroke-width="0.9"/>
<polyline points="1077.5,560.1 1066.9,566.2" fill="none" stroke="#000" stroke-width="0.8"/>
<polygon points="676.4,349.1 669.5,353.1 669.5,368.6 676.4,364.6" fill="#0b5c9a" stroke="#000" stroke-width="1" stroke-linejoin="round" />
<polygon points="663.2,348.9 669.5,353.1 669.5,368.6 663.2,364.4" fill="#0a5692" stroke="#000" stroke-width="1" stroke-linejoin="round" />
<polygon points="670.0,344.9 676.4,349.1 669.5,353.1 663.2,348.9" fill="#0c62a0" stroke="#000" stroke-width="1" stroke-linejoin="round" />
<polygon points="875.5,463.8 868.6,467.9 868.6,483.4 875.5,479.3" fill="#0c6a9a" stroke="#000" stroke-width="1" stroke-linejoin="round" />
<polygon points="862.3,464.2 868.6,467.9 868.6,483.4 862.3,479.7" fill="#0a5692" stroke="#000" stroke-width="1" stroke-linejoin="round" />
<polygon points="869.1,460.2 875.5,463.8 868.6,467.9 862.3,464.2" fill="#0c62a0" stroke="#000" stroke-width="1" stroke-linejoin="round" />
<polygon points="667.4,332.4 675.7,337.9 684.0,343.4 692.3,348.9 700.6,354.4 708.9,359.8 717.2,365.1 725.5,370.4 733.8,375.6 742.1,380.7 750.4,385.8 758.7,390.7 766.9,395.5 775.2,400.3 783.5,405.0 791.8,409.5 800.1,414.0 808.4,418.4 816.7,422.8 825.0,427.0 833.3,431.2 841.6,435.4 849.9,439.5 858.2,443.6 866.5,447.7 866.5,450.7 858.2,446.6 849.9,442.5 841.6,438.4 833.3,434.2 825.0,430.0 816.7,425.8 808.4,421.4 800.1,417.0 791.8,412.5 783.5,408.0 775.2,403.3 766.9,398.5 758.7,393.7 750.4,388.8 742.1,383.7 733.8,378.6 725.5,373.4 717.2,368.1 708.9,362.8 700.6,357.4 692.3,351.9 684.0,346.4 675.7,340.9 667.4,335.4" fill="#0a64a2" stroke="#000" stroke-width="0.9" stroke-linejoin="round" />
<polygon points="866.5,447.7 874.8,452.5 883.1,457.3 891.4,462.1 899.7,466.9 908.0,471.7 916.3,476.5 924.6,481.3 932.9,486.1 941.2,490.9 949.5,495.7 957.8,500.5 966.0,505.3 974.3,510.2 982.6,515.0 990.9,519.8 999.2,524.6 1007.5,529.4 1015.8,534.2 1024.1,539.0 1032.4,543.8 1040.7,548.6 1049.0,553.4 1057.3,558.2 1065.6,563.0 1065.6,565.5 1057.3,560.7 1049.0,555.9 1040.7,551.1 1032.4,546.3 1024.1,541.5 1015.8,536.7 1007.5,531.9 999.2,527.1 990.9,522.3 982.6,517.5 974.3,512.7 966.0,507.8 957.8,503.0 949.5,498.2 941.2,493.4 932.9,488.6 924.6,483.8 916.3,479.0 908.0,474.2 899.7,469.4 891.4,464.6 883.1,459.8 874.8,455.0 866.5,450.2" fill="#085a94" stroke="#000" stroke-width="0.9" stroke-linejoin="round" />
<polygon points="1171.6,501.3 1065.6,563.0 1065.6,565.5 1171.6,503.8" fill="#085a96" stroke="#000" stroke-width="0.9" stroke-linejoin="round" />
<polygon points="773.4,270.7 781.7,275.5 790.0,280.3 798.3,285.1 806.6,289.9 814.9,294.7 823.2,299.5 831.5,304.3 839.8,309.1 848.1,313.9 856.4,318.7 864.7,323.5 872.9,328.3 881.2,333.2 889.5,338.0 897.8,342.8 906.1,347.6 914.4,352.4 922.7,357.2 931.0,362.0 939.3,366.8 947.6,371.6 955.9,376.4 964.2,381.2 972.5,386.0 980.8,390.8 989.1,395.6 997.4,400.4 1005.7,405.2 1014.0,410.0 1022.3,414.8 1030.6,419.6 1038.9,424.4 1047.2,429.2 1055.5,434.0 1063.8,438.8 1072.0,443.6 1080.3,448.5 1088.6,453.3 1096.9,458.1 1105.2,462.9 1113.5,467.7 1121.8,472.5 1130.1,477.3 1138.4,482.1 1146.7,486.9 1155.0,491.7 1163.3,496.5 1171.6,501.3 1065.6,563.0 1057.3,558.2 1049.0,553.4 1040.7,548.6 1032.4,543.8 1024.1,539.0 1015.8,534.2 1007.5,529.4 999.2,524.6 990.9,519.8 982.6,515.0 974.3,510.2 966.0,505.3 957.8,500.5 949.5,495.7 941.2,490.9 932.9,486.1 924.6,481.3 916.3,476.5 908.0,471.7 899.7,466.9 891.4,462.1 883.1,457.3 874.8,452.5 866.5,447.7 858.2,443.6 849.9,439.5 841.6,435.4 833.3,431.2 825.0,427.0 816.7,422.8 808.4,418.4 800.1,414.0 791.8,409.5 783.5,405.0 775.2,400.3 766.9,395.5 758.7,390.7 750.4,385.8 742.1,380.7 733.8,375.6 725.5,370.4 717.2,365.1 708.9,359.8 700.6,354.4 692.3,348.9 684.0,343.4 675.7,337.9 667.4,332.4" fill="url(#gdeck)" stroke="#000" stroke-width="1.1" stroke-linejoin="round" />
<polygon points="808.5,306.2 816.0,310.7 823.6,315.1 831.2,319.5 838.7,323.9 846.3,328.3 853.9,332.7 861.4,337.1 869.0,341.5 876.6,345.8 884.1,350.2 891.7,354.6 899.3,358.9 906.8,363.2 914.4,367.5 922.0,371.9 929.5,376.2 937.1,380.5 944.6,384.8 952.2,389.1 959.8,393.4 906.8,424.3 899.2,420.3 891.6,416.3 884.1,412.3 876.5,408.3 869.0,404.3 861.4,400.2 853.8,396.1 846.3,392.0 838.7,387.8 831.1,383.6 823.6,379.4 816.0,375.1 808.4,370.7 800.9,366.3 793.3,361.9 785.7,357.4 778.2,352.8 770.6,348.2 763.0,343.6 755.5,339.0" fill="url(#ghl)" stroke="none" stroke-width="0" stroke-linejoin="round" />
<polyline points="760.1,278.4 768.4,283.3 776.7,288.2 785.0,293.1 793.3,298.0 801.6,302.9 809.9,307.7 818.2,312.6 826.5,317.4 834.8,322.3 843.1,327.1 851.4,331.9 859.7,336.7 868.0,341.5 876.3,346.3 884.6,351.1 892.9,355.9 901.2,360.6 909.5,365.4 917.8,370.1 926.1,374.8 934.4,379.6 942.7,384.3 951.0,389.0 959.2,393.7 967.5,398.5 975.8,403.3 984.1,408.1 992.4,412.9 1000.7,417.7 1009.0,422.5 1017.3,427.3 1025.6,432.1 1033.9,436.9 1042.2,441.8 1050.5,446.6 1058.8,451.4 1067.1,456.2 1075.4,461.0 1083.7,465.8 1092.0,470.6 1100.3,475.4 1108.6,480.2 1116.9,485.0 1125.2,489.8 1133.5,494.6 1141.8,499.4 1150.1,504.2 1158.3,509.0" fill="none" stroke="#000" stroke-width="0.9"/>
<polyline points="746.9,286.1 755.2,291.1 763.5,296.1 771.8,301.1 780.1,306.0 788.4,311.0 796.7,315.9 805.0,320.8 813.3,325.7 821.6,330.6 829.9,335.5 838.2,340.3 846.4,345.1 854.7,349.9 863.0,354.7 871.3,359.5 879.6,364.2 887.9,368.9 896.2,373.6 904.5,378.2 912.8,382.9 921.1,387.5 929.4,392.2 937.7,396.8 946.0,401.4 954.3,406.2 962.6,411.0 970.9,415.8 979.2,420.6 987.5,425.4 995.8,430.2 1004.1,435.1 1012.4,439.9 1020.7,444.7 1029.0,449.5 1037.3,454.3 1045.5,459.1 1053.8,463.9 1062.1,468.7 1070.4,473.5 1078.7,478.3 1087.0,483.1 1095.3,487.9 1103.6,492.7 1111.9,497.5 1120.2,502.3 1128.5,507.1 1136.8,511.9 1145.1,516.7" fill="none" stroke="#000" stroke-width="0.9"/>
<polyline points="733.6,293.8 741.9,298.9 750.2,304.0 758.5,309.0 766.8,314.1 775.1,319.1 783.4,324.1 791.7,329.1 800.0,334.1 808.3,339.0 816.6,343.9 824.9,348.7 833.2,353.5 841.5,358.3 849.8,363.1 858.1,367.8 866.4,372.5 874.7,377.1 883.0,381.8 891.3,386.4 899.6,391.0 907.9,395.5 916.2,400.1 924.5,404.6 932.8,409.1 941.0,413.9 949.3,418.7 957.6,423.6 965.9,428.4 974.2,433.2 982.5,438.0 990.8,442.8 999.1,447.6 1007.4,452.4 1015.7,457.2 1024.0,462.0 1032.3,466.8 1040.6,471.6 1048.9,476.4 1057.2,481.2 1065.5,486.0 1073.8,490.8 1082.1,495.6 1090.4,500.4 1098.7,505.2 1107.0,510.0 1115.3,514.8 1123.6,519.6 1131.8,524.4" fill="none" stroke="#000" stroke-width="0.9"/>
<polyline points="720.4,301.6 728.7,306.7 737.0,311.9 745.3,317.0 753.6,322.1 761.9,327.2 770.2,332.3 778.5,337.4 786.8,342.4 795.1,347.3 803.4,352.2 811.7,357.1 819.9,361.9 828.2,366.7 836.5,371.5 844.8,376.2 853.1,380.8 861.4,385.4 869.7,390.0 878.0,394.5 886.3,399.0 894.6,403.5 902.9,408.0 911.2,412.4 919.5,416.9 927.8,421.7 936.1,426.5 944.4,431.3 952.7,436.1 961.0,440.9 969.3,445.7 977.6,450.5 985.9,455.3 994.2,460.1 1002.5,464.9 1010.8,469.7 1019.0,474.5 1027.3,479.3 1035.6,484.1 1043.9,488.9 1052.2,493.7 1060.5,498.5 1068.8,503.3 1077.1,508.1 1085.4,512.9 1093.7,517.7 1102.0,522.5 1110.3,527.3 1118.6,532.1" fill="none" stroke="#000" stroke-width="0.9"/>
<polyline points="707.1,309.3 715.4,314.5 723.7,319.8 732.0,325.0 740.3,330.2 748.6,335.4 756.9,340.5 765.2,345.6 773.5,350.7 781.8,355.7 790.1,360.6 798.4,365.5 806.7,370.3 815.0,375.1 823.3,379.8 831.6,384.5 839.9,389.1 848.2,393.7 856.5,398.2 864.8,402.6 873.1,407.1 881.4,411.5 889.7,415.8 898.0,420.2 906.2,424.6 914.5,429.4 922.8,434.2 931.1,439.0 939.4,443.8 947.7,448.6 956.0,453.4 964.3,458.2 972.6,463.0 980.9,467.8 989.2,472.6 997.5,477.4 1005.8,482.2 1014.1,487.0 1022.4,491.8 1030.7,496.6 1039.0,501.4 1047.3,506.2 1055.6,511.0 1063.9,515.8 1072.2,520.6 1080.5,525.5 1088.8,530.3 1097.1,535.1 1105.3,539.9" fill="none" stroke="#000" stroke-width="0.9"/>
<polyline points="693.9,317.0 702.2,322.3 710.5,327.7 718.8,333.0 727.1,338.3 735.4,343.5 743.7,348.7 752.0,353.9 760.3,359.0 768.6,364.0 776.9,369.0 785.2,373.9 793.4,378.8 801.7,383.5 810.0,388.2 818.3,392.8 826.6,397.4 834.9,401.9 843.2,406.4 851.5,410.8 859.8,415.1 868.1,419.4 876.4,423.7 884.7,428.0 893.0,432.3 901.3,437.1 909.6,441.9 917.9,446.7 926.2,451.5 934.5,456.3 942.8,461.1 951.1,465.9 959.4,470.7 967.7,475.5 976.0,480.3 984.3,485.1 992.5,489.9 1000.8,494.7 1009.1,499.5 1017.4,504.3 1025.7,509.1 1034.0,513.9 1042.3,518.8 1050.6,523.6 1058.9,528.4 1067.2,533.2 1075.5,538.0 1083.8,542.8 1092.1,547.6" fill="none" stroke="#000" stroke-width="0.9"/>
<polyline points="680.6,324.7 688.9,330.1 697.2,335.5 705.5,340.9 713.8,346.3 722.1,351.6 730.4,356.9 738.7,362.1 747.0,367.3 755.3,372.4 763.6,377.4 771.9,382.3 780.2,387.1 788.5,391.9 796.8,396.6 805.1,401.2 813.4,405.7 821.7,410.2 830.0,414.6 838.3,418.9 846.6,423.2 854.9,427.4 863.2,431.6 871.5,435.8 879.8,440.0 888.0,444.8 896.3,449.6 904.6,454.4 912.9,459.2 921.2,464.0 929.5,468.8 937.8,473.6 946.1,478.4 954.4,483.2 962.7,488.0 971.0,492.8 979.3,497.6 987.6,502.4 995.9,507.2 1004.2,512.0 1012.5,516.9 1020.8,521.7 1029.1,526.5 1037.4,531.3 1045.7,536.1 1054.0,540.9 1062.3,545.7 1070.6,550.5 1078.8,555.3" fill="none" stroke="#000" stroke-width="0.9"/>
<polyline points="972.5,386.0 866.5,447.7" fill="none" stroke="#000" stroke-width="1.4"/>
<polygon points="1176.3,520.0 1067.7,583.2 1067.7,598.7 1176.3,535.5" fill="#0b5a97" stroke="#000" stroke-width="1" stroke-linejoin="round" />
<polygon points="1061.4,579.5 1067.7,583.2 1067.7,598.7 1061.4,595.0" fill="#0a5692" stroke="#000" stroke-width="1" stroke-linejoin="round" />
<polygon points="1169.9,516.3 1176.3,520.0 1067.7,583.2 1061.4,579.5" fill="#0c609e" stroke="#000" stroke-width="1" stroke-linejoin="round" />

</svg>

<!-- toolbar -->
<div class="a" style="left:470px;top:112px;width:899px;height:39px;background:#f2f2f2"></div>
<div class="a" style="left:470px;top:112px;width:414px;height:1px;background:#fff"></div>
<div class="a" style="left:470px;top:112px;width:1px;height:38px;background:#fff"></div>
<div class="a" style="left:886px;top:112px;width:218px;height:1px;background:#fff"></div>
<div class="a" style="left:470px;top:150px;width:899px;height:1px;background:#a0a0a0"></div>
<div class="a" style="left:884px;top:112px;width:1px;height:38px;background:#8a8a8a"></div>
<div class="a" style="left:885px;top:112px;width:1px;height:38px;background:#fff"></div>
<div class="a" style="left:1103px;top:112px;width:1px;height:38px;background:#8a8a8a"></div>
<div class="a" style="left:1104px;top:112px;width:1px;height:38px;background:#fff"></div>
<div class="a" style="left:1112px;top:113px;width:255px;height:1px;background:#fff"></div>
<div class="a" style="left:1112px;top:113px;width:1px;height:37px;background:#fff"></div>
<div class="a" style="left:1112px;top:149px;width:255px;height:1px;background:#5a5a5a"></div>
<div class="a" style="left:1366px;top:112px;width:2px;height:39px;background:#777"></div>
<div class="a" style="left:515px;top:116px;width:1px;height:31px;background:#c4c4c4"></div>
<div class="a" style="left:568px;top:116px;width:1px;height:31px;background:#c4c4c4"></div>
<div class="a" style="left:698px;top:116px;width:1px;height:31px;background:#c4c4c4"></div>

<svg class="a" style="left:0;top:0" width="1485" height="160" viewBox="0 0 1485 160">
<defs>
<linearGradient id="gcam" x1="0" x2="0" y1="0" y2="1"><stop offset="0" stop-color="#c9dcf0"/><stop offset="1" stop-color="#f4f8fc"/></linearGradient>
<linearGradient id="gfit" x1="0" x2="0" y1="0" y2="1"><stop offset="0" stop-color="#f6f7f9"/><stop offset="1" stop-color="#d2d8e2"/></linearGradient>
<linearGradient id="gtri" x1="0" x2="1" y1="0" y2="0"><stop offset="0" stop-color="#e9ecf2"/><stop offset="1" stop-color="#b8c0cc"/></linearGradient>
<linearGradient id="gtri2" x1="0" x2="1" y1="0" y2="0"><stop offset="0" stop-color="#cfd5de"/><stop offset="1" stop-color="#f2f4f7"/></linearGradient>
<linearGradient id="gq" x1="0" x2="1" y1="0" y2="1"><stop offset="0" stop-color="#e8f6fc"/><stop offset="1" stop-color="#8fd0f0"/></linearGradient>
</defs>
<!-- camera -->
<path d="M482.5,122.5 L484,120 L494,120 L495.5,122.5 L501.5,122.5 Q503,122.5 503,124 L503,141 Q503,142.5 501.5,142.5 L476.5,142.5 Q475,142.5 475,141 L475,124 Q475,122.5 476.5,122.5 Z" fill="url(#gcam)" stroke="#3b5688" stroke-width="1.2"/>
<circle cx="489.2" cy="132" r="6.8" fill="#c5d6ea" stroke="#4a6290" stroke-width="1"/>
<circle cx="489.2" cy="132" r="4.8" fill="#17305e"/>
<circle cx="498.3" cy="126.3" r="0.9" fill="#17305e"/>
<!-- magnifier -->
<circle cx="536.3" cy="129.2" r="7.2" fill="#e2e6ee" stroke="#4a4a4a" stroke-width="1.5"/>
<line x1="541.8" y1="135" x2="549" y2="143" stroke="#3c3c3c" stroke-width="3" stroke-linecap="round"/>
<path d="M551,117.5 L545,125.5 L549.5,125.5 L545.5,132 L556,123 L551.5,123 L554.5,117.5 Z" fill="#f5c842" stroke="#e07a10" stroke-width="1"/>
<!-- cube eye -->
<path d="M581.5,124.5 L587,118 L607.5,118 L607.5,138 L602.5,144.5 L581.5,144.5 Z" fill="#eef0f4" stroke="#a8b2c4" stroke-width="1.2"/>
<path d="M581.5,124.5 L602.5,124.5 L607.5,118 M602.5,124.5 L602.5,144.5" fill="none" stroke="#a8b2c4" stroke-width="1.2"/>
<path d="M602.5,124.5 L607.5,118 L607.5,138 L602.5,144.5 Z" fill="#d3d8e0"/>
<ellipse cx="600.5" cy="136.8" rx="8.2" ry="5.3" fill="#f1dc9c" stroke="#2c3e6a" stroke-width="1.1"/>
<ellipse cx="600.5" cy="136.8" rx="3" ry="2.5" fill="#e7c86a"/>
<line x1="592" y1="145" x2="608.5" y2="129" stroke="#d85a20" stroke-width="1.3"/>
<path d="M616.5,128.5 L626,128.5 L621.2,133.5 Z" fill="#707070"/>
<!-- color cube -->
<g>
<path d="M640.5,124 L646,118 L666.5,118 L666.5,138.5 L661.5,144.5 L640.5,144.5 Z" fill="#2a3e6e"/>
<rect x="641.2" y="124.7" width="6.3" height="6.2" fill="#e83a2a"/><rect x="648.3" y="124.7" width="6.3" height="6.2" fill="#f07828"/><rect x="655.4" y="124.7" width="5.7" height="6.2" fill="#f5dc40"/>
<rect x="641.2" y="131.6" width="6.3" height="6.2" fill="#f6b030"/><rect x="648.3" y="131.6" width="6.3" height="6.2" fill="#f4d040"/><rect x="655.4" y="131.6" width="5.7" height="6.2" fill="#b8e048"/>
<rect x="641.2" y="138.5" width="6.3" height="5.4" fill="#78e060"/><rect x="648.3" y="138.5" width="6.3" height="5.4" fill="#60d878"/><rect x="655.4" y="138.5" width="5.7" height="5.4" fill="#30a8e8"/>
<path d="M647,119 L665.5,119 L661,124 L642.5,124 Z" fill="#f0d8a0"/>
<path d="M662,124.5 L666,119.5 L666,138 L662,143.5 Z" fill="#2060c8"/>
</g>
<path d="M675.5,128.5 L685.5,128.5 L680.5,133.5 Z" fill="#707070"/>
<!-- fit -->
<rect x="711.5" y="117.5" width="27" height="27" fill="url(#gfit)" stroke="#4e6490" stroke-width="1.3"/>
<rect x="712" y="118" width="26" height="3.2" fill="#8a9cbc"/>
<g stroke="#1c3462" stroke-width="1.3" fill="#1c3462">
<line x1="724.8" y1="124.5" x2="724.8" y2="129"/><line x1="724.8" y1="134.5" x2="724.8" y2="139.5"/>
<line x1="716.5" y1="131.8" x2="722" y2="131.8"/><line x1="727.5" y1="131.8" x2="733" y2="131.8"/>
<path d="M722.2,125.5 L724.8,122.5 L727.4,125.5 Z M722.2,138 L724.8,141 L727.4,138 Z M718.5,129.2 L715.5,131.8 L718.5,134.4 Z M731,129.2 L734,131.8 L731,134.4 Z" stroke-width="0.6"/>
</g>
<!-- axes icon -->
<line x1="758.5" y1="137.3" x2="758.5" y2="125" stroke="#2c4ea8" stroke-width="1.3"/>
<path d="M756,126 L758.5,121.5 L761,126 Z" fill="#2c4ea8"/>
<line x1="758.5" y1="137.3" x2="768" y2="130.5" stroke="#1a8a3a" stroke-width="1.3"/>
<path d="M765.5,129 L770.5,128.5 L768,132.5 Z" fill="#1a8a3a"/>
<line x1="758.5" y1="137.3" x2="768" y2="142.5" stroke="#e02020" stroke-width="1.3"/>
<path d="M765.5,143.8 L771,144.5 L768,140 Z" fill="#e02020"/>
<text x="761" y="124.5" font-size="9" font-family="Liberation Sans" fill="#222">Z</text>
<text x="771.5" y="131.5" font-size="8.5" font-family="Liberation Sans" fill="#222">Y</text>
<text x="772" y="144.5" font-size="8.5" font-family="Liberation Sans" fill="#222">X</text>
<path d="M787.5,128.5 L797.5,128.5 L792.5,133.5 Z" fill="#707070"/>
<!-- rotate cw -->
<path d="M813,130.6 L825,130.6 L825,142.5 A11.9,11.9 0 0 1 813,130.6 Z" fill="url(#gq)"/>
<path d="M813,130.6 L825,130.6 L825,142.5" fill="none" stroke="#1a78c8" stroke-width="1"/>
<rect x="821" y="130.6" width="4" height="4" fill="none" stroke="#1a78c8" stroke-width="0.8"/>
<path d="M836.8,132 A11.9,11.9 0 1 1 832.6,121.5" fill="none" stroke="#1c3462" stroke-width="1.6"/>
<path d="M830.3,125.2 L836.3,119.2 L836.6,128 Z" fill="#1c3462"/>
<!-- rotate ccw -->
<path d="M877.8,130.6 L865.8,130.6 L865.8,142.5 A11.9,11.9 0 0 0 877.8,130.6 Z" fill="url(#gq)"/>
<path d="M877.8,130.6 L865.8,130.6 L865.8,142.5" fill="none" stroke="#1a78c8" stroke-width="1"/>
<rect x="865.8" y="130.6" width="4" height="4" fill="none" stroke="#1a78c8" stroke-width="0.8"/>
<path d="M854,132 A11.9,11.9 0 1 0 858.2,121.5" fill="none" stroke="#1c3462" stroke-width="1.6"/>
<path d="M860.5,125.2 L854.5,119.2 L854.2,128 Z" fill="#1c3462"/>
<!-- camcorder -->
<rect x="1117" y="124.5" width="19.5" height="15" rx="1.5" fill="url(#gfit)" stroke="#3b5688" stroke-width="1.1"/>
<rect x="1119.5" y="128.3" width="8.3" height="3.2" fill="#a8acb4"/>
<path d="M1136.5,129 L1145,125.5 L1145,138.5 L1136.5,135 Z" fill="#bfe4f8" stroke="#1a6ec8" stroke-width="1"/>
<!-- first -->
<rect x="1161.8" y="121.3" width="3.6" height="19.4" rx="0.8" fill="url(#gtri2)" stroke="#3b5688" stroke-width="0.9"/>
<path d="M1165.5,131 L1182,121.5 L1182,140.5 Z" fill="url(#gtri)" stroke="#3b5688" stroke-width="1"/>
<!-- prev -->
<path d="M1201.5,131 L1218.5,121.5 L1218.5,140.5 Z" fill="url(#gtri2)" stroke="#3b5688" stroke-width="1"/>
<rect x="1220.6" y="121.3" width="3.6" height="19.4" rx="0.8" fill="url(#gtri2)" stroke="#3b5688" stroke-width="0.9"/>
<!-- play -->
<path d="M1246.8,121.5 L1263.6,131 L1246.8,140.5 Z" fill="url(#gtri2)" stroke="#3b5688" stroke-width="1"/>
<!-- next -->
<rect x="1284.2" y="121.3" width="3.4" height="19.4" rx="0.8" fill="url(#gtri2)" stroke="#3b5688" stroke-width="0.9"/>
<path d="M1289.5,121.5 L1306.4,131 L1289.5,140.5 Z" fill="url(#gtri2)" stroke="#3b5688" stroke-width="1"/>
<!-- extension -->
<path d="M1354,124.5 L1359.8,130.8 L1354,137 Z" fill="#111"/>
<path d="M1357.5,122 L1365,122 L1365,129 Z M1357.5,139.7 L1365,139.7 L1365,132.5 Z" fill="#111"/>
</svg>
<div class="a t" style="left:886px;top:123px;font-size:15px;letter-spacing:1.5px">时间:</div>
<div class="a" style="left:938px;top:121px;width:80px;height:21px;border:1px solid #a8a8a8;background:#f0f0f0"></div>
<div class="a t" style="left:943px;top:125px;font-size:13px">1</div>
<svg class="a" style="left:1000px;top:127px" width="12" height="8"><path d="M0.5,0.5 L10.5,0.5 L5.5,6 Z" fill="#707070"/></svg>
<div class="a" style="left:1025px;top:125px;width:13px;height:12px;border-right:2px solid #222;border-bottom:2px solid #222"></div>
<div class="a" style="left:1045px;top:119px;width:50px;height:24px;border:1px solid #7a7a7a;background:#fff"></div>
<div class="a t" style="left:1050px;top:125px;font-size:13px">1</div>
<svg class="a" style="left:1080px;top:124px" width="9" height="14"><path d="M1,4 L4.5,0.5 L8,4 Z" fill="#b0b0b0"/><path d="M1,8.5 L8,8.5 L4.5,12 Z" fill="#606060"/></svg>

<!-- legend -->
<div class="a t" style="left:1245px;top:477px;font-size:17px;-webkit-text-stroke:0.45px #000;letter-spacing:-0.2px">PrincipalS 1</div>
<div class="a t" style="left:1270px;top:495px;font-size:16.5px;-webkit-text-stroke:0.45px #000">(&nbsp;Pa&nbsp;)</div>
<div class="a" style="left:1269px;top:525px;width:15px;height:202px;background:linear-gradient(#ff0000 0%,#ff3a00 10%,#ffb000 18%,#ffff00 24%,#a8ff00 34%,#00ff00 50%,#00ffa0 62%,#00ffff 72%,#00a0ff 84%,#0030ff 93%,#0000ff 100%)"></div>
<div class="a t" style="left:1286px;top:517px;font-size:12px;letter-spacing:0.5px">1.472e+08</div>
<div class="a t" style="left:1286px;top:585px;font-size:12px;letter-spacing:0.5px">8.971e+07</div>
<div class="a t" style="left:1286px;top:652px;font-size:12px;letter-spacing:0.5px">3.221e+07</div>
<div class="a t" style="left:1286px;top:720px;font-size:12px;letter-spacing:0.5px">-2.530e+07</div>

<!-- axes triad -->
<svg class="a" style="left:0;top:0" width="1485" height="895" viewBox="0 0 1485 895">
<line x1="559.7" y1="670.7" x2="559.7" y2="633" stroke="#0000ff" stroke-width="1.2"/>
<path d="M556.5,636 L559.7,627 L562.9,636 Z" fill="#0000ff"/>
<line x1="559.7" y1="670.7" x2="586" y2="656" stroke="#00e000" stroke-width="1.2"/>
<ellipse cx="587.5" cy="654.5" rx="3.5" ry="3" fill="#00d000"/>
<line x1="559.7" y1="670.7" x2="590" y2="687" stroke="#ff0000" stroke-width="1.2"/>
<path d="M587,684 L597,690 L587,691 Z" fill="#ff0000"/><ellipse cx="591.5" cy="688" rx="4" ry="3.2" fill="#ff0000"/>
<text x="561.5" y="631" font-size="12" font-weight="bold" font-family="Liberation Sans" fill="#0000ff">Z</text>
<text x="589" y="651" font-size="12" font-weight="bold" font-family="Liberation Sans" fill="#00d000">Y</text>
<text x="592" y="684" font-size="12" font-weight="bold" font-family="Liberation Sans" fill="#ff0000">X</text>
</svg>
<div class="a t" style="left:856px;top:737px;font-size:15px;letter-spacing:0.3px">结果模型:通用分析</div>

<!-- notification widget -->
<div class="a" style="left:1358px;top:840px;width:127px;height:55px;background:#1b1f29"></div>
<div class="a" style="left:1379px;top:828px;width:50px;height:51px;border-radius:50%;background:linear-gradient(#434a5a 0%,#3a4150 24%,#313745 26%,#2a2f3b 100%);box-shadow:0 0 6px rgba(0,0,0,0.35)"></div>
<svg class="a" style="left:1389px;top:840px" width="31" height="31" viewBox="0 0 31 31"><path d="M2,4.8 Q15,0.5 28,4.8 Q27.5,20 15,29.5 Q2.5,20 2,4.8 Z" fill="none" stroke="#a9acb4" stroke-width="2.2"/><path d="M3,6 L15,17 L27,6" fill="none" stroke="#b9bcc4" stroke-width="2.6"/></svg>
<div class="a t" style="left:1449px;top:856px;font-size:16px;color:#e8e8e8">有</div>
<div class="a t" style="left:1469px;top:855px;font-size:17px;color:#f4c800">7</div>
</body></html>
